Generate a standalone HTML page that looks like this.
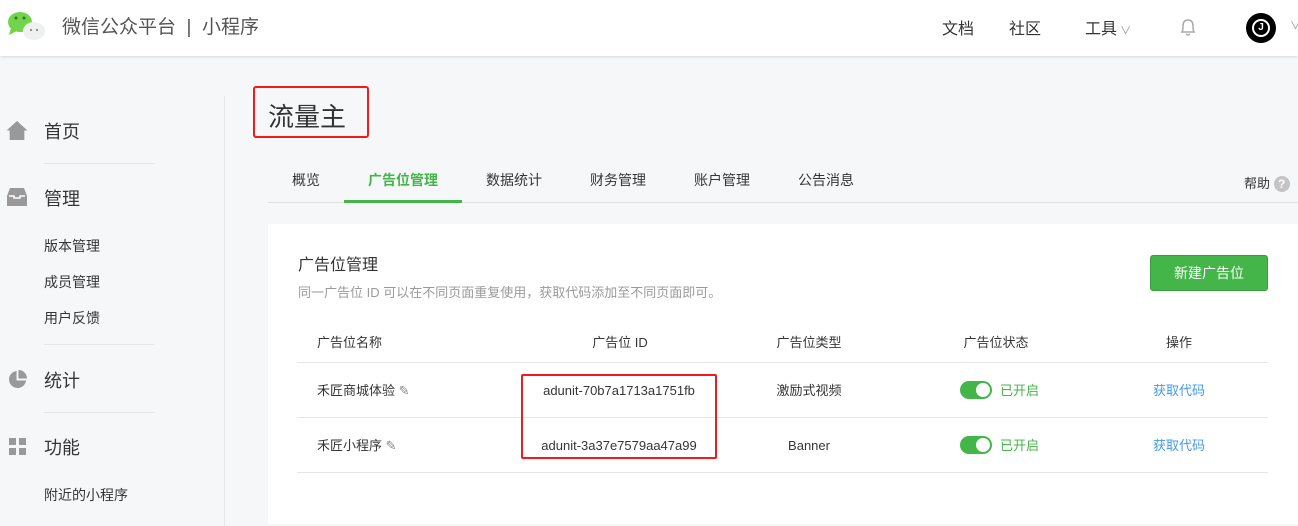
<!DOCTYPE html>
<html><head><meta charset="utf-8"><style>
*{margin:0;padding:0;box-sizing:border-box}
body{width:1298px;height:522px;overflow:hidden;background:#f6f7f9;font-family:"Liberation Sans","Noto Sans CJK SC",sans-serif;color:#353535;position:relative}
.a{position:absolute;white-space:nowrap}
.hd{position:absolute;left:0;top:0;width:1298px;height:56px;background:#fff;box-shadow:0 1px 3px rgba(0,0,0,.12)}
.line{position:absolute;background:#e4e6e9;height:1px}
.tog{position:absolute;width:32px;height:18px;border-radius:9px;background:#44b549}
.tog:after{content:"";position:absolute;right:2px;top:2px;width:14px;height:14px;border-radius:50%;background:#fff}
.c{text-align:center;transform:translateX(-50%)}
</style></head><body>
<div class="hd">
<svg class="a" style="left:7px;top:10px" width="38" height="30" viewBox="0 0 38 30"><ellipse cx="13" cy="12" rx="12" ry="10" fill="#73d44c"/><path d="M4 18 L2 25 L10 21Z" fill="#73d44c"/><circle cx="9" cy="8" r="1.5" fill="#2a7a2a"/><circle cx="17" cy="8" r="1.5" fill="#2a7a2a"/><ellipse cx="27" cy="21" rx="11" ry="9" fill="#eef0f2"/><circle cx="24" cy="20" r="1.1" fill="#888"/><circle cx="30" cy="20" r="1.1" fill="#888"/></svg>
<div class="a" style="left:62px;top:12px;font-size:19px;color:#555">微信公众平台 &nbsp;| &nbsp;小程序</div>
<div class="a" style="left:942px;top:15px;font-size:16px;color:#333">文档</div>
<div class="a" style="left:1009px;top:15px;font-size:16px;color:#333">社区</div>
<div class="a" style="left:1085px;top:15px;font-size:16px;color:#333">工具<span style="font-size:11px;color:#999"> ∨</span></div>
<svg class="a" style="left:1179px;top:17px" width="18" height="20" viewBox="0 0 18 20"><path d="M3 15 Q4 13 4 9 Q4 3 9 3 Q14 3 14 9 Q14 13 15 15Z M7 17 Q9 19 11 17" fill="none" stroke="#aaa" stroke-width="1.5"/></svg>
<div class="a" style="left:1246px;top:13px;width:30px;height:30px;border-radius:50%;background:#000"></div>
<div class="a" style="left:1252px;top:19px;width:18px;height:18px;border-radius:50%;border:2px solid #fff;color:#fff;font-size:10px;text-align:center;line-height:14px;font-weight:bold">J</div>
<div class="a" style="left:1290px;top:17px;font-size:11px;color:#999">∨</div>
</div>
<div class="a" style="left:224px;top:96px;width:1px;height:430px;background:#e4e6e9"></div>
<svg class="a" style="left:6px;top:120px" width="22" height="21" viewBox="0 0 20 20"><path d="M10 1 L20 10 H17 V19 H3 V10 H0Z" fill="#999"/></svg>
<div class="a" style="left:44px;top:118px;font-size:18px">首页</div>
<div class="line" style="left:44px;top:163px;width:110px"></div>
<svg class="a" style="left:7px;top:188px" width="20" height="18" viewBox="0 0 20 18"><path d="M3 0 H17 L20 8 V18 H0 V8Z" fill="#999"/><path d="M2 8 H7 V10 H13 V8 H18" fill="none" stroke="#fff" stroke-width="1.5"/></svg>
<div class="a" style="left:44px;top:185px;font-size:18px">管理</div>
<div class="a" style="left:44px;top:236px;font-size:14px">版本管理</div>
<div class="a" style="left:44px;top:272px;font-size:14px">成员管理</div>
<div class="a" style="left:44px;top:308px;font-size:14px">用户反馈</div>
<div class="line" style="left:44px;top:344px;width:110px"></div>
<svg class="a" style="left:8px;top:370px" width="19" height="19" viewBox="0 0 20 20"><path d="M9 1 A9 9 0 1 0 19 11 H9Z" fill="#999"/><path d="M11 0 A9 9 0 0 1 20 9 H11Z" fill="#999"/></svg>
<div class="a" style="left:44px;top:367px;font-size:18px">统计</div>
<div class="line" style="left:44px;top:412px;width:110px"></div>
<svg class="a" style="left:9px;top:438px" width="18" height="18"><rect width="7" height="7" fill="#999"/><rect x="10" width="7" height="7" fill="#999"/><rect y="10" width="7" height="7" fill="#999"/><rect x="10" y="10" width="7" height="7" fill="#999"/></svg>
<div class="a" style="left:44px;top:434px;font-size:18px">功能</div>
<div class="a" style="left:44px;top:485px;font-size:14px">附近的小程序</div>

<div class="a" style="left:268px;top:97px;font-size:26px;color:#333">流量主</div>
<div class="a" style="left:253px;top:86px;width:116px;height:52px;border:2px solid #f5191c;border-radius:3px"></div>

<div class="a" style="left:268px;top:202px;width:1030px;height:1px;background:#e0e1e2"></div>
<div class="a" style="left:292px;top:170px;font-size:14px">概览</div>
<div class="a" style="left:368px;top:170px;font-size:14px;color:#44b549;font-weight:bold">广告位管理</div>
<div class="a" style="left:344px;top:200px;width:118px;height:3px;background:#44b549"></div>
<div class="a" style="left:486px;top:170px;font-size:14px">数据统计</div>
<div class="a" style="left:590px;top:170px;font-size:14px">财务管理</div>
<div class="a" style="left:694px;top:170px;font-size:14px">账户管理</div>
<div class="a" style="left:798px;top:170px;font-size:14px">公告消息</div>
<div class="a" style="left:1244px;top:173px;font-size:13px">帮助 <span style="display:inline-block;width:16px;height:16px;border-radius:50%;background:#c4c4c4;color:#fff;text-align:center;line-height:16px;font-size:12px;font-weight:bold">?</span></div>

<div class="a" style="left:268px;top:224px;width:1030px;height:300px;background:#fff"></div>
<div class="a" style="left:298px;top:251px;font-size:16px;color:#333">广告位管理</div>
<div class="a" style="left:298px;top:282px;font-size:13px;color:#9a9a9a">同一广告位 ID 可以在不同页面重复使用，获取代码添加至不同页面即可。</div>
<div class="a" style="left:1150px;top:255px;width:118px;height:36px;background:#44b549;border:1px solid #3a9d3e;border-radius:3px;color:#fff;font-size:14px;text-align:center;line-height:34px">新建广告位</div>

<div class="a" style="left:317px;top:332px;font-size:13px">广告位名称</div>
<div class="a c" style="left:620px;top:332px;font-size:13px">广告位 ID</div>
<div class="a c" style="left:809px;top:332px;font-size:13px">广告位类型</div>
<div class="a c" style="left:996px;top:332px;font-size:13px">广告位状态</div>
<div class="a c" style="left:1179px;top:332px;font-size:13px">操作</div>
<div class="line" style="left:297px;top:362px;width:971px"></div>
<div class="line" style="left:297px;top:417px;width:971px"></div>
<div class="line" style="left:297px;top:472px;width:971px"></div>

<div class="a" style="left:317px;top:380px;font-size:13px">禾匠商城体验 <span style="color:#888">✎</span></div>
<div class="a c" style="left:619px;top:383px;font-size:13px">adunit-70b7a1713a1751fb</div>
<div class="a c" style="left:809px;top:380px;font-size:13px">激励式视频</div>
<div class="tog" style="left:960px;top:381px"></div>
<div class="a" style="left:1000px;top:380px;font-size:13px;color:#44b549">已开启</div>
<div class="a c" style="left:1179px;top:380px;font-size:13px;color:#459ae9">获取代码</div>

<div class="a" style="left:317px;top:435px;font-size:13px">禾匠小程序 <span style="color:#888">✎</span></div>
<div class="a c" style="left:619px;top:438px;font-size:13px">adunit-3a37e7579aa47a99</div>
<div class="a c" style="left:809px;top:438px;font-size:13px">Banner</div>
<div class="tog" style="left:960px;top:436px"></div>
<div class="a" style="left:1000px;top:435px;font-size:13px;color:#44b549">已开启</div>
<div class="a c" style="left:1179px;top:435px;font-size:13px;color:#459ae9">获取代码</div>

<div class="a" style="left:521px;top:374px;width:196px;height:85px;border:2px solid #f5191c;border-radius:2px"></div>
</body></html>
